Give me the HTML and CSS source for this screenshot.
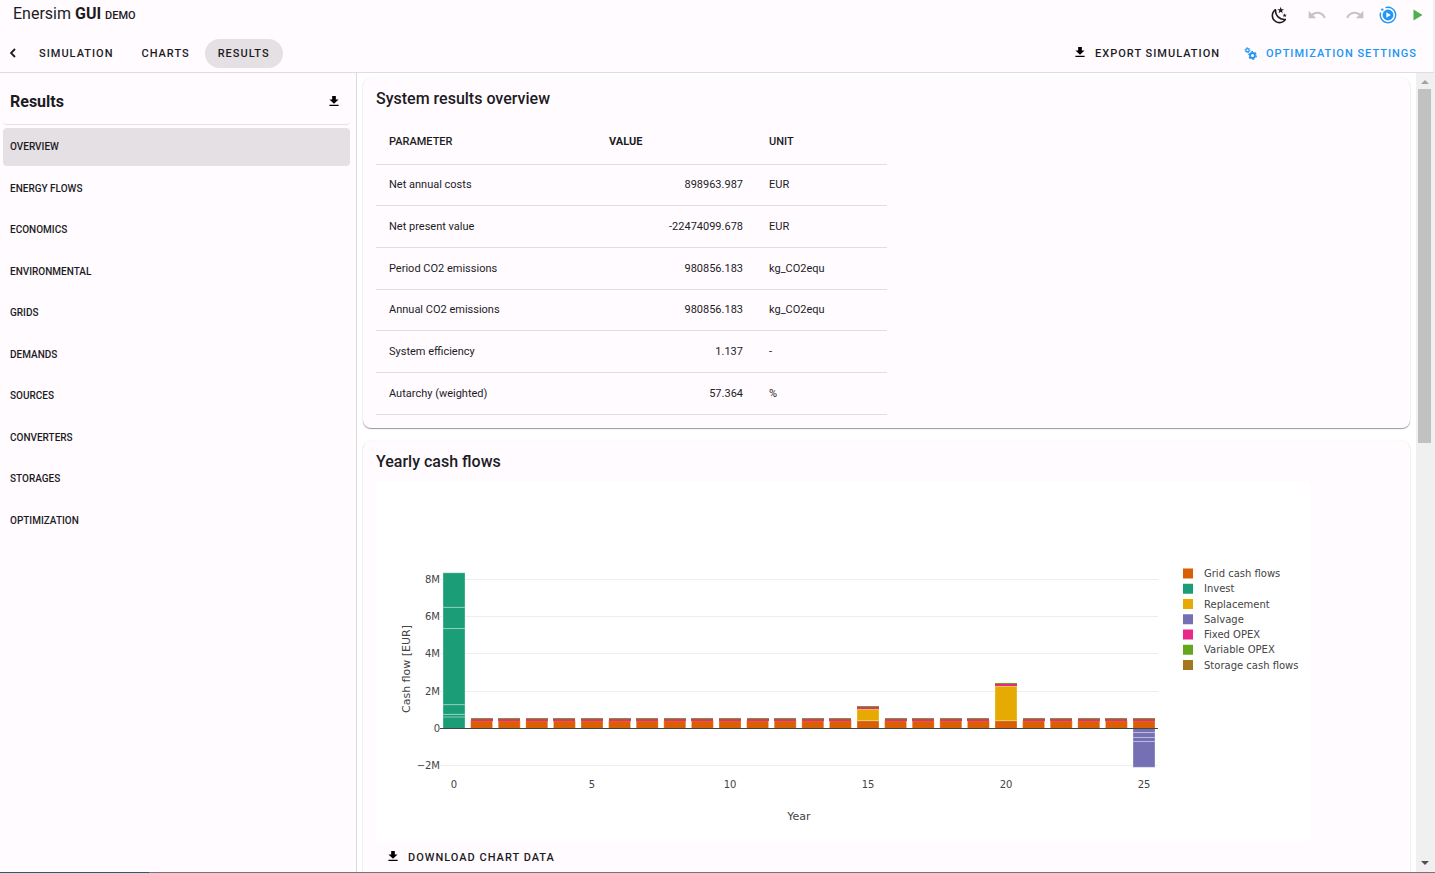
FILE: index.html
```html
<!DOCTYPE html>
<html lang="en">
<head>
    <meta charset="UTF-8">
    <meta name="viewport" content="width=device-width, initial-scale=1.0">
    <title>Enersim GUI</title>
    <link rel="stylesheet" href="styles.css">
</head>
<body>
    <svg class="defs" aria-hidden="true">
        <symbol id="icon-download" viewBox="0 0 10 12">
            <path d="M3 1h4v4h3L5 9.500 0 5h3zM0 10.500h10V12H0z"/>
        </symbol>
    </svg>
    <header class="header">
        <div class="title-bar">
            <div class="brand">Enersim <b>GUI</b> <small>DEMO</small></div>
            <div class="tools">
                <button class="tool" aria-label="Dark mode">
                    <svg width="19" height="19" viewBox="0 0 24 24"><path fill="#1c1b1f" d="m17.750 4.090-2.530 1.940.91 3.060-2.630-1.810-2.630 1.810.91-3.060-2.530-1.940L12.440 4l1.060-3 1.060 3zm3.500 6.910-1.640 1.250.59 1.980-1.700-1.170-1.700 1.170.59-1.980L15.750 11l2.060-.05L18.500 9l.69 1.950zm-2.280 4.950c.83-.08 1.720 1.100 1.190 1.850-.32.450-.66.870-1.080 1.270C15.170 23 8.840 23 4.940 19.070c-3.910-3.900-3.910-10.240 0-14.140.4-.4.820-.76 1.270-1.080.75-.53 1.930.36 1.850 1.190-.27 2.860.69 5.830 2.890 8.020a9.960 9.960 0 0 0 8.020 2.890m-1.640 2.020a12.080 12.080 0 0 1-7.800-3.470c-2.170-2.190-3.330-5-3.490-7.820-2.810 3.140-2.700 7.960.31 10.980 3.020 3.010 7.840 3.120 10.980.31"/></svg>
                </button>
                <button class="tool" aria-label="Undo" disabled>
                    <svg width="20" height="20" viewBox="0 0 24 24"><path fill="#c6c3c8" d="M12.500 8c-2.650 0-5.050 1-6.900 2.600L2 7v9h9l-3.620-3.620c1.390-1.160 3.160-1.880 5.120-1.880 3.540 0 6.550 2.310 7.600 5.500l2.370-.78C21.080 11.030 17.150 8 12.500 8"/></svg>
                </button>
                <button class="tool" aria-label="Redo" disabled>
                    <svg width="20" height="20" viewBox="0 0 24 24"><path fill="#c6c3c8" d="M18.400 10.600C16.550 9 14.150 8 11.500 8c-4.650 0-8.580 3.030-9.960 7.220L3.900 16a8 8 0 0 1 7.600-5.500c1.950 0 3.730.72 5.120 1.880L13 16h9V7z"/></svg>
                </button>
                <button class="tool" aria-label="Run optimization">
                    <svg width="18" height="18" viewBox="0 0 18 18"><path d="M6.500 1.700a7.700 7.700 0 1 1-4.800 4.800" fill="none" stroke="#2196f3" stroke-width="1.400"/><circle cx="9" cy="9" r="5.400" fill="#2196f3"/><path d="M7.300 6.200v5.600l4.500-2.800z" fill="#fff"/><circle cx="3.300" cy="3.600" r="1.200" fill="#2196f3"/></svg>
                </button>
                <button class="tool" aria-label="Run simulation">
                    <svg width="10" height="12" viewBox="0 0 10 12"><path fill="#4caf50" d="M0.500 0.500v11l9-5.500z"/></svg>
                </button>
            </div>
        </div>
        <div class="nav-bar">
            <nav class="tabs">
                <button class="back" aria-label="Back">
                    <svg width="6" height="10" viewBox="0 0 6 10"><path d="M5 1 1 5l4 4" fill="none" stroke="#1c1b1f" stroke-width="1.800"/></svg>
                </button>
                <a href="#simulation" class="tab">SIMULATION</a>
                <a href="#charts" class="tab">CHARTS</a>
                <a href="#results" class="tab active">RESULTS</a>
            </nav>
            <div class="actions">
                <button class="btn"><svg class="icon"><use href="#icon-download"/></svg>EXPORT SIMULATION</button>
                <button class="btn btn-blue">
                    <svg width="13" height="13" viewBox="0 0 13 13"><g fill="none" stroke="#2196f3"><circle cx="3.500" cy="3.200" r="1.600" stroke-width="1.200"/><circle cx="3.500" cy="3.200" r="2.500" stroke-width="1" stroke-dasharray="1.300 1.300"/><circle cx="8.500" cy="8.500" r="2.500" stroke-width="1.800"/><circle cx="8.500" cy="8.500" r="3.800" stroke-width="1.200" stroke-dasharray="2 2"/></g></svg>
                    OPTIMIZATION SETTINGS
                </button>
            </div>
        </div>
    </header>
    <div class="page">
        <aside class="sidebar">
            <div class="sidebar-head">
                <h1>Results</h1>
                <button class="tool" aria-label="Download results"><svg class="icon"><use href="#icon-download"/></svg></button>
            </div>
            <nav class="menu">
                <a href="#overview" class="active">OVERVIEW</a>
                <a href="#energy-flows">ENERGY FLOWS</a>
                <a href="#economics">ECONOMICS</a>
                <a href="#environmental">ENVIRONMENTAL</a>
                <a href="#grids">GRIDS</a>
                <a href="#demands">DEMANDS</a>
                <a href="#sources">SOURCES</a>
                <a href="#converters">CONVERTERS</a>
                <a href="#storages">STORAGES</a>
                <a href="#optimization">OPTIMIZATION</a>
            </nav>
        </aside>
        <main class="content">
            <section class="card">
                <h2>System results overview</h2>
                <table class="results">
                    <thead>
                        <tr><th>PARAMETER</th><th class="strong">VALUE</th><th>UNIT</th></tr>
                    </thead>
                    <tbody>
                        <tr><td>Net annual costs</td><td class="num">898963.987</td><td>EUR</td></tr>
                        <tr><td>Net present value</td><td class="num">-22474099.678</td><td>EUR</td></tr>
                        <tr><td>Period CO2 emissions</td><td class="num">980856.183</td><td>kg_CO2equ</td></tr>
                        <tr><td>Annual CO2 emissions</td><td class="num">980856.183</td><td>kg_CO2equ</td></tr>
                        <tr><td>System efficiency</td><td class="num">1.137</td><td>-</td></tr>
                        <tr><td>Autarchy (weighted)</td><td class="num">57.364</td><td>%</td></tr>
                    </tbody>
                </table>
            </section>
            <section class="card">
                <h2>Yearly cash flows</h2>
                <svg id="cashFlow" class="chart" viewBox="0 0 934 359" role="img" aria-label="Yearly cash flows"></svg>
                <button class="btn btn-download"><svg class="icon"><use href="#icon-download"/></svg>DOWNLOAD CHART DATA</button>
            </section>
        </main>
        <div class="scrollbar" aria-hidden="true">
            <svg width="8" height="5" viewBox="0 0 8 5"><path d="M0 5h8L4 1z" fill="#a3a3a3"/></svg>
            <div class="thumb"></div>
            <svg width="8" height="5" viewBox="0 0 8 5"><path d="M0 0h8L4 4z" fill="#505050"/></svg>
        </div>
    </div>
    <footer class="status-bar"><div class="progress"></div></footer>
    <script src="chart.js"></script>
</body>
</html>
```
FILE: chart.js
```js
const colors = {
    'Grid cash flows': '#d95f02',
    'Invest': '#1b9e77',
    'Replacement': '#e6ab02',
    'Salvage': '#7570b3',
    'Fixed OPEX': '#e7298a',
    'Variable OPEX': '#66a61e',
    'Storage cash flows': '#a6761d'
};

const zeroY = 246.5;
const perMillion = 18.65;
const firstX = 78;
const yearStep = 27.6;
const barWidth = 22;

const y = value => zeroY - value * perMillion;
let svg = '<rect width="934" height="359" fill="#fff"/>';

// grid lines and value labels
for (const value of [8, 6, 4, 2, 0, -2]) {
    const lineY = Math.floor(y(value)) + 0.5;
    if (value !== 0) svg += `<path d="M64 ${lineY}H782" stroke="#eee"/>`;
    const label = value === 0 ? '0' : `${value}M`.replace('-', '−');
    svg += `<text x="64" y="${lineY + 3.5}" text-anchor="end">${label}</text>`;
}

function bar(year, from, to, color) {
    const left = firstX + year * yearStep - barWidth / 2;
    svg += `<rect x="${left}" y="${y(to)}" width="${barWidth}" height="${y(from) - y(to)}" fill="${color}" stroke="#fff" stroke-opacity="0.3"/>`;
}

// OPEX bars are too thin for an outline, so they are snapped to whole pixels
function thinBar(year, top, height, color) {
    const left = firstX + year * yearStep - barWidth / 2;
    svg += `<rect x="${left}" y="${top}" width="${barWidth}" height="${height}" fill="${color}" shape-rendering="crispEdges"/>`;
}

function stack(year, steps, color) {
    let from = 0;
    for (const to of steps) {
        bar(year, Math.min(from, to), Math.max(from, to), color);
        from = to;
    }
}

stack(0, [0.62, 0.76, 1.28, 5.36, 6.5, 8.35], colors['Invest']);

const replacement = { 15: 0.62, 20: 1.85 };
for (let year = 1; year <= 25; year++) {
    let top = 0.42;
    bar(year, 0, top, colors['Grid cash flows']);
    if (replacement[year]) {
        bar(year, top, top + replacement[year], colors['Replacement']);
        top += replacement[year];
    }
    const pinkY = Math.round(y(top)) - 2;
    thinBar(year, pinkY, 2, colors['Fixed OPEX']);
    thinBar(year, pinkY - 1, 1, colors['Variable OPEX']);
}

stack(25, [-0.22, -0.48, -0.7, -2.08], colors['Salvage']);

svg += '<path d="M64 246.5H782" stroke="#444"/>';

for (let year = 0; year <= 25; year += 5) {
    svg += `<text x="${firstX + year * yearStep}" y="306" text-anchor="middle">${year}</text>`;
}
svg += '<text class="axis-title" x="423" y="338" text-anchor="middle">Year</text>';
svg += '<text class="axis-title" transform="translate(34 187) rotate(-90)" text-anchor="middle">Cash flow [EUR]</text>';

Object.keys(colors).forEach((name, i) => {
    const rowY = 91.5 + i * 15.25;
    svg += `<rect x="807" y="${rowY - 5}" width="10" height="10" fill="${colors[name]}"/>`;
    svg += `<text x="828" y="${rowY + 3.5}">${name}</text>`;
});

document.getElementById('cashFlow').innerHTML = svg;
```
FILE: styles.css
```css
* { box-sizing: border-box; }
body { margin: 0; height: 100vh; display: flex; flex-direction: column; overflow: hidden; background: #fffbff; color: #1c1b1f; font-family: Roboto, "Liberation Sans", sans-serif; }
button { border: none; background: none; padding: 0; color: inherit; font-family: inherit; cursor: pointer; }
a { color: inherit; text-decoration: none; }
svg { display: block; flex: none; }
.defs { position: absolute; width: 0; height: 0; }
.icon { width: 10px; height: 11px; margin-bottom: 3px; }

.header { flex: none; border-bottom: 1px solid #e0dce0; border-right: 2px solid #f0f0f0; }
.title-bar { display: flex; align-items: center; justify-content: space-between; height: 30px; padding: 0 10px 0 13px; }
.brand { font-size: 16px; line-height: 28px; }
.brand small { font-size: 11px; font-weight: 500; }
.tools { display: flex; align-items: center; gap: 18px; }
.tool { display: flex; align-items: center; justify-content: center; }
.tools .tool:nth-child(4) { margin-left: -4px; }
.tools .tool:nth-child(5) { margin-left: -2px; }
.nav-bar { display: flex; align-items: center; justify-content: space-between; height: 42px; padding: 4px 16px 0 10px; }
.tabs { display: flex; align-items: center; gap: 2px; }
.back { margin-right: 8px; }
.tab, .btn { font-size: 11px; font-weight: 500; line-height: 29px; letter-spacing: 1px; }
.tab { padding: 0 13px; border-radius: 15px; }
.tab.active { background: #e5e0e4; }
.actions { display: flex; gap: 24px; }
.btn { display: flex; align-items: center; gap: 10px; }
.btn-blue { color: #2196f3; gap: 9px; }

.page { flex: 1; min-height: 0; display: flex; }
.sidebar { flex: none; width: 357px; padding: 3px 6px 0 3px; border-right: 1px solid #dcd8dc; }
.sidebar-head { display: flex; align-items: center; justify-content: space-between; height: 49px; padding: 3px 11px 0 7px; border-bottom: 1px solid #e5e0e4; border-radius: 4px; }
.sidebar-head h1 { margin: 0; font-size: 16px; line-height: 24px; font-weight: 700; }
.menu { display: flex; flex-direction: column; justify-content: space-between; height: 412px; margin-top: 3px; }
.menu a { padding: 0 7px; border-radius: 4px; font-size: 10px; font-weight: 500; line-height: 38px; }
.menu a.active { background: #e5e0e4; }

.content { flex: 1; min-width: 0; overflow: hidden; background: #fff; padding: 5px 6px 0; }
.card { background: #fffbff; border-radius: 8px; padding: 9px 13px 13px; margin-bottom: 13px; box-shadow: 0 1px 1px #9a989a, 0 0 2px #f0eef0; }
.card h2 { margin: 0; font-size: 16px; line-height: 24px; font-weight: 500; }
.results { width: 511px; margin-top: 7px; border-collapse: collapse; table-layout: fixed; font-size: 11px; }
.results th, .results td { height: 42px; padding: 0 13px; border-bottom: 1px solid #e2dde1; text-align: left; }
.results tr:nth-child(3n+1) td { height: 41px; }
.results th { height: 46px; padding: 2px 13px 0; font-weight: 500; }
.results th.strong { font-weight: 700; }
.results th:nth-child(1) { width: 220px; }
.results th:nth-child(2) { width: 160px; }
.results td.num { text-align: right; }

.chart { width: 934px; max-width: 100%; margin-top: 8px; font-family: "DejaVu Sans", sans-serif; font-size: 10px; fill: #444; }
.chart .axis-title { font-size: 11px; }
.btn-download { margin-top: 2px; padding: 0 12px; }

.scrollbar { flex: none; display: flex; flex-direction: column; align-items: center; justify-content: space-between; width: 19px; padding: 6px 2px 6px 0; background: #f0f0f0; }
.thumb { width: 13px; height: 354px; margin: 5px 0 auto; background: #c1c1c1; }

.status-bar { flex: none; height: 1px; background: #757575; }
.progress { width: 149px; height: 1px; background: #1b6070; }
```
